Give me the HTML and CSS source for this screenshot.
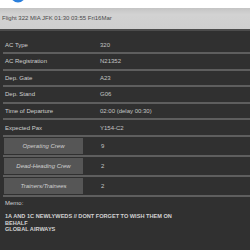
FILE: index.html
```html
<!DOCTYPE html>
<html lang="en">
<head>
    <meta charset="UTF-8">
    <title>Flight 322</title>
    <link rel="stylesheet" href="styles.css">
</head>
<body>
    <div class="topbar">
        <svg class="nav-dot" width="20" height="8" viewBox="0 0 20 8">
            <circle cx="10" cy="-5" r="7.5" fill="#2b7fdc"/>
        </svg>
    </div>

    <div class="flight-header">Flight 322 MIA JFK 01:30 03:55 Fri16Mar</div>

    <div class="flight-panel">
        <div class="info-row"><span class="info-label">AC Type</span><span class="info-value">320</span></div>
        <div class="info-row"><span class="info-label">AC Registration</span><span class="info-value">N21352</span></div>
        <div class="info-row"><span class="info-label">Dep. Gate</span><span class="info-value">A23</span></div>
        <div class="info-row"><span class="info-label">Dep. Stand</span><span class="info-value">G06</span></div>
        <div class="info-row"><span class="info-label">Time of Departure</span><span class="info-value">02:00 (delay 00:30)</span></div>
        <div class="info-row"><span class="info-label">Expected Pax</span><span class="info-value">Y154-C2</span></div>

        <div class="crew-row"><button class="crew-btn">Operating Crew</button><span class="info-value">9</span></div>
        <div class="crew-row"><button class="crew-btn">Dead-Heading Crew</button><span class="info-value">2</span></div>
        <div class="crew-row"><button class="crew-btn">Trainers/Trainees</button><span class="info-value">2</span></div>

        <div class="memo">
            <div class="memo-title">Memo:</div>
            <div class="memo-text">1A AND 1C NEWLYWEDS // DONT FORGET TO WISH THEM ON<br>BEHALF<br>GLOBAL AIRWAYS</div>
        </div>
    </div>
</body>
</html>
```

FILE: styles.css
```css
* {
    margin: 0;
    padding: 0;
    box-sizing: border-box;
}

body {
    font-family: 'Liberation Sans', Arial, sans-serif;
    background: #fff;
    width: 250px;
    height: 250px;
    overflow: hidden;
}

.topbar {
    height: 8px;
    padding-left: 8px;
}

.nav-dot {
    display: block;
}

.flight-header {
    height: 23px;
    padding-left: 2px;
    line-height: 21px;
    font-size: 6px;
    color: #4a4a4a;
    background: linear-gradient(#c4c4c4, #d2d2d2 30%, #cfcfcf);
    border-bottom: 2px solid #4c4c4c;
}

.flight-panel {
    height: 219px;
    background: #303030;
    padding-top: 6.4px;
}

.info-row {
    display: flex;
    align-items: center;
    height: 16.6px;
    margin-left: 3px;
    border-bottom: 2px solid #5e5e5e;
    font-size: 6px;
}

.info-label {
    flex: 0 0 97px;
    padding-left: 2px;
    color: #cfcfcf;
}

.info-value {
    color: #c4c4c4;
    font-size: 6px;
}

.crew-row {
    display: flex;
    align-items: flex-start;
    height: 20px;
    margin-left: 3px;
    padding-top: 1px;
    border-bottom: 2px solid #5e5e5e;
}

.crew-row .info-value {
    line-height: 16px;
    padding-left: 1px;
}

.crew-btn {
    flex: 0 0 79px;
    height: 16px;
    margin: 0 17px 0 1px;
    background: #565656;
    border: none;
    color: #d0d0d0;
    font-family: 'Liberation Sans', Arial, sans-serif;
    font-size: 6px;
    font-style: italic;
}

.memo {
    padding: 2px 0 0 5px;
    color: #d2d2d2;
    font-size: 6px;
}

.memo-title {
    line-height: 8px;
    margin-bottom: 6px;
}

.memo-text {
    font-weight: bold;
    line-height: 6.7px;
    font-size: 5.6px;
}
```
